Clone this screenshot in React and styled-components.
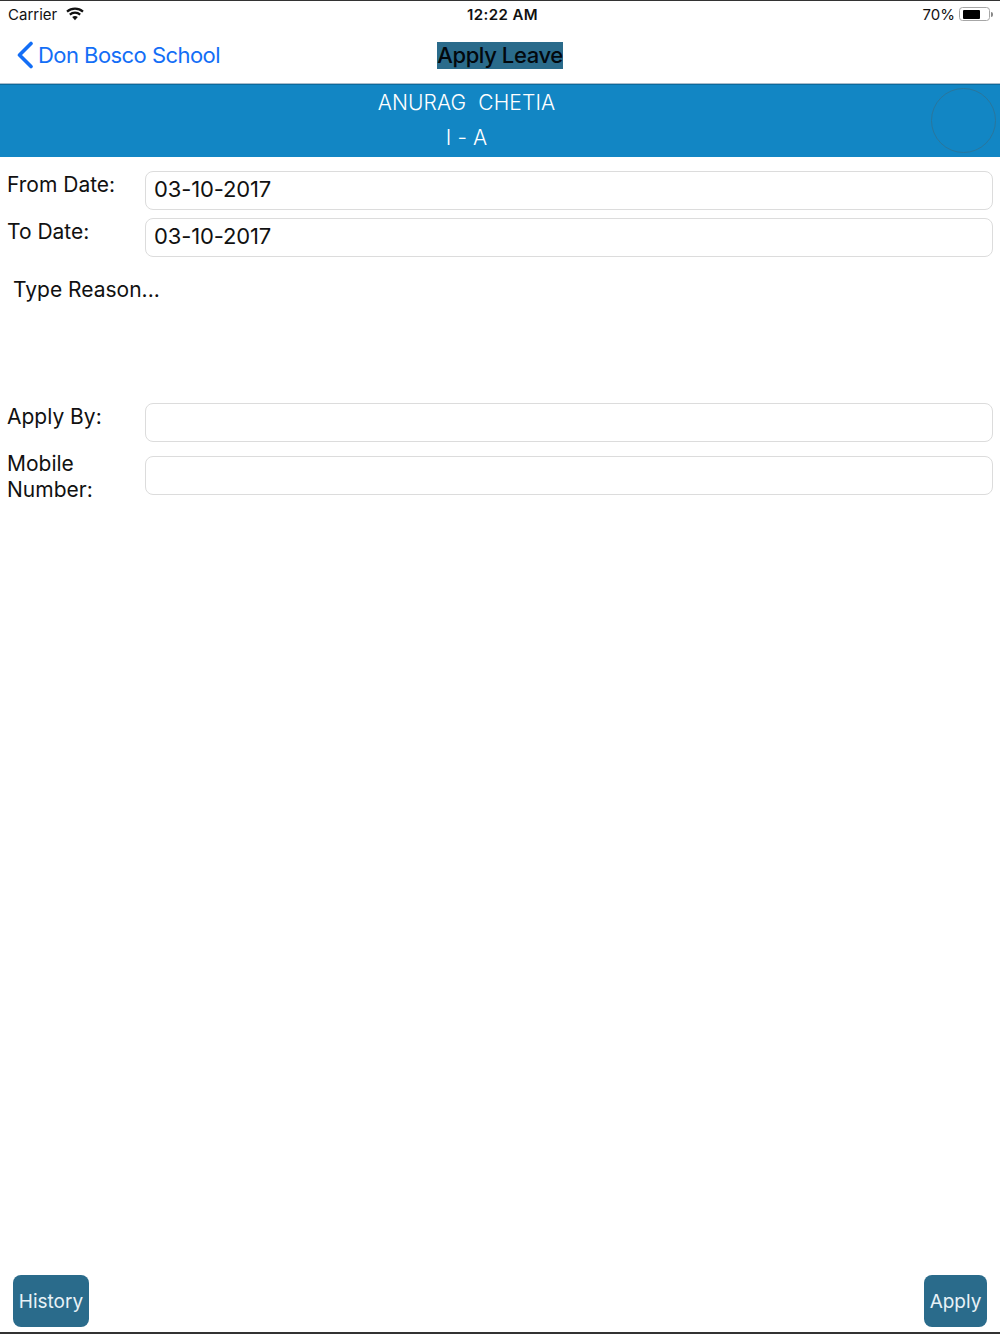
import React from 'react';
import styled, {createGlobalStyle} from 'styled-components';

const GlobalStyle = createGlobalStyle`
    html, body {
        margin: 0;
        padding: 0;
        background: #fff;
    }
    body {
        font-family: Inter, 'Liberation Sans', sans-serif;
        color: #111;
    }
`;

const Screen = styled.div`
    width: 1000px;
    height: 1334px;
    display: flex;
    flex-direction: column;
    box-sizing: border-box;
    border-top: 1px solid #333;
    border-bottom: 2px solid #333;
    overflow: hidden;
`;

const StatusBar = styled.div`
    height: 26px;
    display: grid;
    grid-template-columns: minmax(0, 1fr) auto minmax(0, 1fr);
    align-items: center;
    padding: 0 7px 0 8px;
    font-size: 15px;
`;

const StatusLeft = styled.div`
    display: flex;
    align-items: center;
    gap: 9px;
`;

const StatusTime = styled.div`
    margin-left: 4px;
    font-weight: 600;
    font-size: 15px;
    letter-spacing: 0.4px;
`;

const StatusRight = styled.div`
    display: flex;
    align-items: center;
    justify-content: flex-end;
    gap: 4px;
`;

const BatteryBody = styled.div`
    width: 31px;
    height: 14px;
    box-sizing: border-box;
    padding: 1.5px 2.5px;
    border: 1.5px solid #a6a6a6;
    border-radius: 3.5px;
    display: flex;
`;

const BatteryFill = styled.div`
    background: #000;
    border-radius: 1px;
`;

const BatteryTip = styled.div`
    width: 2px;
    height: 5px;
    margin-left: -3px;
    background: #888;
    border-radius: 0 2px 2px 0;
`;

const NavBar = styled.div`
    height: 56px;
    display: grid;
    grid-template-columns: minmax(0, 1fr) auto minmax(0, 1fr);
    align-items: center;
    border-bottom: 1px solid #a9bccb;
`;

const BackLink = styled.a`
    display: flex;
    align-items: center;
    gap: 4px;
    margin-left: 16px;
    color: #136ef6;
    font-size: 22px;
    letter-spacing: -0.55px;
    white-space: nowrap;
`;

const NavTitle = styled.div`
    background: #2a6b8b;
    color: #02080d;
    font-size: 22px;
    font-weight: 500;
    line-height: 27px;
    letter-spacing: -0.4px;
`;

const StudentBanner = styled.div`
    position: relative;
    height: 73px;
    background: #1286c4;
    color: #fff;
    display: flex;
    flex-direction: column;
    align-items: center;
    padding-right: 67px;
    box-sizing: border-box;
    border-top: 1px solid #0c6a9c;
    font-size: 21px;
    font-weight: 300;
    letter-spacing: 0.1px;
`;

const BannerLine = styled.div`
    height: 35px;
    line-height: 35px;
    white-space: pre;
`;

const AvatarRing = styled.div`
    position: absolute;
    top: 3px;
    right: 4px;
    width: 65px;
    height: 65px;
    box-sizing: border-box;
    border: 1px solid #2a769c;
    border-radius: 50%;
`;

const Form = styled.div`
    flex: 1;
    display: flex;
    flex-direction: column;
    padding: 14px 7px 0;
`;

const Row = styled.div`
    display: grid;
    grid-template-columns: 138px 1fr;
    min-height: 40px;
    margin-bottom: ${({gap}) => gap}px;
`;

const Label = styled.label`
    margin-top: ${({lift}) => (lift ? -5 : 1)}px;
    font-size: 21px;
    line-height: 26px;
    color: #111;
`;

const Field = styled.div`
    height: 39px;
    box-sizing: border-box;
    border: 1px solid #dcdcdc;
    border-radius: 8px;
    padding: 0 8px;
    font-size: 22px;
    line-height: 35px;
    letter-spacing: -0.15px;
    color: #111;
`;

const Reason = styled.div`
    height: 126px;
    margin-top: 19px;
    padding: 0 6px;
    font-size: 21px;
    line-height: 26px;
`;

const Footer = styled.div`
    display: flex;
    justify-content: space-between;
    padding: 0 13px 5px;
`;

const ActionButton = styled.button`
    width: ${({wide}) => wide}px;
    height: 52px;
    border: none;
    border-radius: 8px;
    padding: 0;
    background: #2a6b8b;
    color: #e8f2f7;
    font-family: inherit;
    font-size: 19px;
`;

const WifiIcon = () => (
    <svg width="18" height="14" viewBox="0 0 18 14">
        <path d="M1 4.6 C5.6 .6 12.4 .6 17 4.6" fill="none" stroke="#111" strokeWidth="2.2"/>
        <path d="M3.8 7.6 C6.8 5 11.2 5 14.2 7.6" fill="none" stroke="#111" strokeWidth="2.2"/>
        <path d="M6.2 10 C7.9 8.7 10.1 8.7 11.8 10 L9 13.2 Z" fill="#111"/>
    </svg>
);

const BackChevron = () => (
    <svg width="18" height="28" viewBox="0 0 18 28">
        <path d="M15 2.5 L3.5 14 L15 25.5" fill="none" stroke="#136ef6" strokeWidth="3.6" strokeLinecap="round" strokeLinejoin="round"/>
    </svg>
);

const formRows = [
    {label: 'From Date:', value: '03-10-2017', gap: 7},
    {label: 'To Date:', value: '03-10-2017', gap: 0},
];

export default function App() {
    return (
        <Screen>
            <GlobalStyle/>
            <StatusBar>
                <StatusLeft>Carrier <WifiIcon/></StatusLeft>
                <StatusTime>12:22 AM</StatusTime>
                <StatusRight>
                    70%
                    <BatteryBody><BatteryFill style={{width: '72%'}}/></BatteryBody>
                    <BatteryTip/>
                </StatusRight>
            </StatusBar>
            <NavBar>
                <BackLink><BackChevron/>Don Bosco School</BackLink>
                <NavTitle>Apply Leave</NavTitle>
            </NavBar>
            <StudentBanner>
                <BannerLine>ANURAG  CHETIA</BannerLine>
                <BannerLine>I - A</BannerLine>
                <AvatarRing/>
            </StudentBanner>
            <Form>
                {formRows.map(row => (
                    <Row key={row.label} gap={row.gap}>
                        <Label>{row.label}</Label>
                        <Field>{row.value}</Field>
                    </Row>
                ))}
                <Reason>Type Reason...</Reason>
                <Row gap={13}>
                    <Label>Apply By:</Label>
                    <Field/>
                </Row>
                <Row gap={0}>
                    <Label lift>Mobile<br/>Number:</Label>
                    <Field/>
                </Row>
            </Form>
            <Footer>
                <ActionButton wide={76}>History</ActionButton>
                <ActionButton wide={63}>Apply</ActionButton>
            </Footer>
        </Screen>
    );
}
